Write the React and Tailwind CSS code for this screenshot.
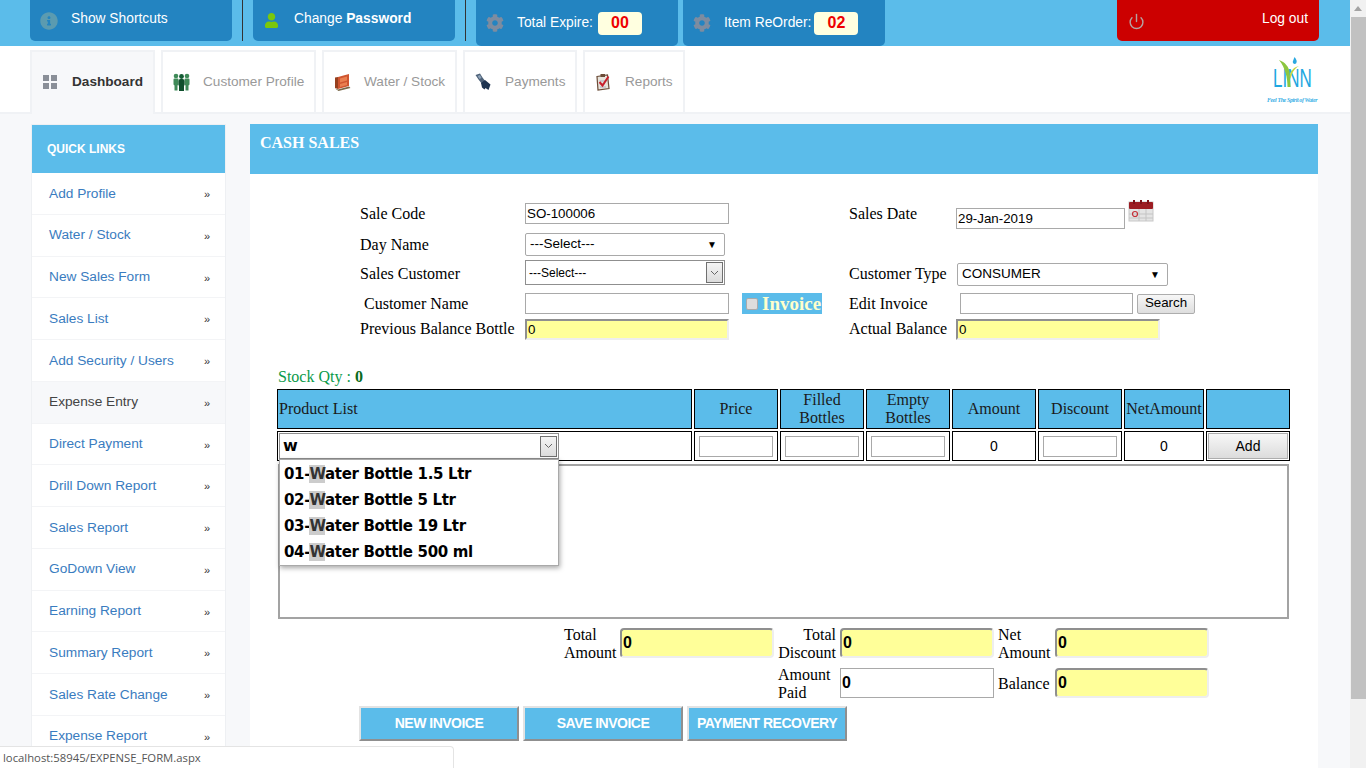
import { FaCog, FaInfoCircle, FaUser } from 'react-icons/fa';
import { Power } from 'lucide-react';

const serif = 'font-["Liberation_Serif",serif]';

const sideLinks = [
    'Add Profile', 'Water / Stock', 'New Sales Form', 'Sales List', 'Add Security / Users',
    'Expense Entry', 'Direct Payment', 'Drill Down Report', 'Sales Report', 'GoDown View',
    'Earning Report', 'Summary Report', 'Sales Rate Change', 'Expense Report',
];

const products = ['ater Bottle 1.5 Ltr', 'ater Bottle 5 Ltr', 'ater Bottle 19 Ltr', 'ater Bottle 500 ml'];

const CustomerIcon = () => (
    <svg width="17" height="18" viewBox="0 0 17 18">
        <g fill="#3f8a58">
            <circle cx="3" cy="3" r="2.3" /><circle cx="14" cy="3" r="2.3" />
            <path d="M0.5 6.5q0-1 1-1h3q1 0 1 1v5l-1 1v5h-3v-5l-1-1zM11.5 6.5q0-1 1-1h3q1 0 1 1v5l-1 1v5h-3v-5l-1-1z" />
        </g>
        <circle cx="8.5" cy="3.5" r="2.4" fill="#145c34" />
        <path d="M5.5 8q0-2 2-2h2q2 0 2 2v4l-.5 1v5h-5v-5l-.5-1z" fill="#0f4f2c" />
    </svg>
);

const StockIcon = () => (
    <svg width="17" height="18" viewBox="0 0 17 18">
        <path d="M4 4l11-3v12l-11 3z" fill="#cf5530" />
        <path d="M1 4.5l3-.5v12l-3-1z" fill="#96401f" />
        <path d="M6 5.5l7-2v4l-7 2zM6 11l7-2v3l-7 2z" fill="#ea7f50" />
        <path d="M1 15.5l3 1 11-3 1.5 1.5-12 3z" fill="#7a6848" />
    </svg>
);

const PaymentIcon = () => (
    <svg width="16" height="18" viewBox="0 0 16 18">
        <path d="M0.5 2l4.5-1.5 2.5 4 3 4-3.5 2.5-3.500-4.500z" fill="#4d6178" />
        <path d="M6 10l4-3 5.500 4.500-2 5.500-3-2-1 1.500-2.500-2z" fill="#1d3350" />
        <path d="M2.500 3l2.500-1 1.500 3-2 1z" fill="#8fa3b8" />
    </svg>
);

const ReportIcon = () => (
    <svg width="16" height="18" viewBox="0 0 16 18">
        <path d="M2 3.500l10.500-1.500 1.500 13.500-11 1.500z" fill="#e8e4dc" stroke="#6b4c38" strokeWidth="1.200" />
        <rect x="5.500" y="1" width="4.500" height="3" fill="#6b4c38" />
        <path d="M4.500 8h7M4.500 11h5M5 14h6" stroke="#aab2c0" strokeWidth="1" />
        <path d="M4.500 9l3 3.500 6-9" fill="none" stroke="#c8202c" strokeWidth="2" />
    </svg>
);

const CalendarIcon = () => (
    <svg width="26" height="23" viewBox="0 0 26 23">
        <rect x="1" y="3" width="24" height="19" fill="#e4e4e4" stroke="#c8c8c8" />
        <rect x="1" y="3" width="24" height="7" rx="1" fill="#9c1c22" />
        <rect x="5" y="1" width="2" height="4" fill="#7d1218" /><rect x="12" y="1" width="2" height="4" fill="#7d1218" /><rect x="19" y="1" width="2" height="4" fill="#7d1218" />
        <path d="M1 15h24M1 19h24M11 10v12M18 10v12" stroke="#c4c4c4" strokeWidth="1" />
        <circle cx="7" cy="15" r="2.500" fill="none" stroke="#c43038" strokeWidth="1.200" />
    </svg>
);

const Logo = () => (
    <div className="w-[56px] flex flex-col items-center">
        <svg width="30" height="30" viewBox="0 0 30 30" className="-mb-[20px] relative z-10 -ml-[3px]">
            <path d="M3 3c6 2 10 7 10.500 12l1 15h-3c0-9-2-19-8.500-27z" fill="#8cc63f" />
            <path d="M23 9c-4 2-7 6-8.500 13l-.8-3c1.300-6 4.300-9 9.300-10z" fill="#c4d641" />
            <path d="M18.500 0c2 2.500 3 4.500 1.500 6.500-1.500 1.200-3.500 0-3.200-2z" fill="#2aa8e0" />
        </svg>
        <div className='font-["Liberation_Sans",sans-serif] text-[25px] leading-[22px] text-[#1ea7e1] scale-x-[0.68]'>LINN</div>
        <div className='mt-[7px] font-["Liberation_Serif",serif] italic font-bold text-[6px] leading-[8px] text-[#3ab0e6] tracking-[-0.4px] whitespace-nowrap'>Feel The Spirit of Water</div>
    </div>
);

const TopButton = ({ width = 'w-[202px]', height = 'h-[41px]', bg = 'bg-[#2384c1]', children }) => (
    <div className={`${width} ${height} ${bg} rounded-b-[5px] flex items-center text-white text-[13.8px] shrink-0`}>
        {children}
    </div>
);

const Tab = ({ width, icon, active, children }) => (
    <div className={`${width} border-2 border-[#f0f2f5] border-b-0 flex items-center gap-[13px] pl-[9px] text-[13.6px] shrink-0 ${active ? 'h-[64px] -mb-[2px] pb-[2px] bg-[#f7f8fa] font-bold text-[#333333]' : 'h-[62px] bg-white text-[#999999]'}`}>
        <span className="w-[18px] flex justify-center">{icon}</span>
        {children}
    </div>
);

const TextInput = ({ width, value = '', yellow }) => (
    <input
        readOnly
        value={value}
        className={`${width} h-[21px] px-[1px] text-[13.33px] text-black outline-none ${yellow ? 'bg-[#ffff99] border-2 border-t-[#8f8f8f] border-l-[#8f8f8f] border-r-[#eeeeee] border-b-[#eeeeee]' : 'bg-white border border-[#a9a9a9]'}`}
    />
);

const SelectBox = ({ width, height = 'h-[23px]', text, className = '' }) => (
    <div className={`${width} ${height} border border-[#a9a9a9] rounded-[2px] bg-white flex items-center justify-between pl-[4px] pr-[7px] text-[13.5px] text-black ${className}`}>
        {text}
        <span className="text-[10px]">▼</span>
    </div>
);

const DropArrow = () => (
    <span className="w-[17px] h-[21px] border border-[#707070] bg-gradient-to-b from-[#f4f4f4] to-[#dcdcdc] flex items-center justify-center">
        <svg width="9" height="6" viewBox="0 0 9 6"><path d="M1 1l3.500 3.500 3.500-3.500" fill="none" stroke="#666666" /></svg>
    </span>
);

const Label = ({ width, className = '', children }) => (
    <div className={`${width} text-[16px] leading-[18px] text-black shrink-0 ${serif} ${className}`}>{children}</div>
);

const HeadCell = ({ children, left }) => (
    <div className={`border border-black bg-[#5bbcea] flex items-center text-[16px] leading-[18px] text-[#1a1a1a] ${left ? 'pl-[1px]' : 'justify-center text-center'} ${serif}`}>
        {children}
    </div>
);

const BodyCell = ({ children }) => (
    <div className="border border-black bg-white flex items-center justify-center text-[14px] text-black">{children}</div>
);

const CellInput = () => <input readOnly className="w-[74px] h-[21px] border border-[#a9a9a9] bg-white" />;

const TotalInput = ({ plain }) => (
    <input
        readOnly
        value="0"
        className={`w-[154px] h-[30px] px-[1px] text-[16px] font-bold text-black outline-none ${plain ? 'bg-white border border-[#a9a9a9]' : 'bg-[#ffff99] rounded-[4px] border-2 border-t-[#8f8f8f] border-l-[#8f8f8f] border-r-[#eeeeee] border-b-[#eeeeee]'}`}
    />
);

const ActionButton = ({ children }) => (
    <button className="w-[160px] h-[35px] bg-[#5bbcea] text-white text-[14px] font-bold tracking-[-0.5px] border-2 border-t-[#e3e3e3] border-l-[#e3e3e3] border-r-[#8f8f8f] border-b-[#8f8f8f]">
        {children}
    </button>
);

export default function App() {
    return (
        <div className='relative w-[1366px] h-[768px] overflow-hidden flex font-["Liberation_Sans",sans-serif] bg-[#f7f8fa]'>
            <div className="w-[1350px] shrink-0">
                {/* Top bar */}
                <header className="h-[46px] bg-[#5bbcea] flex items-start pl-[30px] pr-[31px]">
                    <TopButton>
                        <FaInfoCircle className="ml-[10px] text-[#5b9bb0] text-[18px]" />
                        <span className="ml-[13px] -mt-[2px]">Show Shortcuts</span>
                    </TopButton>
                    <div className="w-px h-[41px] bg-[#333333] ml-[10px] mr-[10px]" />
                    <TopButton>
                        <FaUser className="ml-[11px] text-[#7ac70c] text-[15px]" />
                        <span className="ml-[15px] -mt-[2px]">Change <b>Password</b></span>
                    </TopButton>
                    <div className="w-px h-[41px] bg-[#333333] ml-[10px] mr-[10px]" />
                    <TopButton height="h-[46px]">
                        <FaCog className="ml-[10px] text-[#7d8ca0] text-[18px]" />
                        <span className="ml-[13px] mt-[1px]">Total Expire:</span>
                        <span className="ml-[5px] w-[44px] h-[23px] rounded-[4px] bg-[#ffffe0] text-[#ee0000] font-bold text-[16px] flex items-center justify-center">00</span>
                    </TopButton>
                    <div className="w-[5px]" />
                    <TopButton height="h-[46px]">
                        <FaCog className="ml-[10px] text-[#7d8ca0] text-[18px]" />
                        <span className="ml-[13px] mt-[1px]">Item ReOrder:</span>
                        <span className="ml-[3px] w-[44px] h-[23px] rounded-[4px] bg-[#ffffe0] text-[#ee0000] font-bold text-[16px] flex items-center justify-center">02</span>
                    </TopButton>
                    <div className="ml-auto">
                        <TopButton bg="bg-[#cc0000]">
                            <Power className="ml-[11px] mt-[2px] text-[#b4a2a2]" size={17} strokeWidth={2} />
                            <span className="ml-auto mr-[11px] -mt-[2px]">Log out</span>
                        </TopButton>
                    </div>
                </header>

                {/* Tabs */}
                <nav className="h-[68px] bg-white border-b-2 border-[#f0f2f5] flex items-end gap-[6px] pl-[30px] pr-[28px]">
                    <Tab width="w-[125px]" active icon={
                        <span className="grid grid-cols-2 gap-[2px]">
                            <i className="w-[6px] h-[6px] bg-[#8a8f98]" /><i className="w-[6px] h-[6px] bg-[#8a8f98]" />
                            <i className="w-[6px] h-[6px] bg-[#8a8f98]" /><i className="w-[6px] h-[6px] bg-[#8a8f98]" />
                        </span>
                    }>Dashboard</Tab>
                    <Tab width="w-[155px]" icon={<CustomerIcon />}>Customer Profile</Tab>
                    <Tab width="w-[135px]" icon={<StockIcon />}>Water / Stock</Tab>
                    <Tab width="w-[114px]" icon={<PaymentIcon />}>Payments</Tab>
                    <Tab width="w-[102px]" icon={<ReportIcon />}>Reports</Tab>
                    <div className="ml-auto self-start mt-[11px] mr-[2px]"><Logo /></div>
                </nav>

                {/* Body */}
                <div className="flex items-start pl-[31px] pt-[10px] gap-[24px]">
                    <aside className="w-[195px] border border-[#eef0f3] bg-white shrink-0">
                        <div className="h-[48px] bg-[#5bbcea] text-white text-[12px] font-bold flex items-center pl-[15px]">QUICK LINKS</div>
                        {sideLinks.map((link) => (
                            <div
                                key={link}
                                className={`h-[41.75px] pt-[1px] border-b border-[#f3f4f6] flex items-center justify-between pl-[17px] pr-[15px] text-[13.7px] ${link === 'Expense Entry' ? 'bg-[#f7f8fa] text-[#444444]' : 'text-[#3a7cc0]'}`}
                            >
                                {link}
                                <span className="text-[11px] text-[#333333] mt-[1px]">»</span>
                            </div>
                        ))}
                    </aside>

                    <main className="w-[1068px] shrink-0 bg-white h-[700px]">
                        <div className={`h-[50px] bg-[#5bbcea] text-white text-[16px] font-bold pl-[10px] pt-[7px] ${serif}`}>CASH SALES</div>

                        {/* Sale form */}
                        <section className="relative pl-[110px] pt-[29px] h-[194px]">
                            <div className="flex h-[21px] items-center">
                                <Label width="w-[165px]">Sale Code</Label>
                                <TextInput width="w-[204px]" value="SO-100006" />
                                <Label width="w-[107px]" className="ml-[120px]">Sales Date</Label>
                                <div className="flex items-start mt-[10px]">
                                    <TextInput width="w-[169px]" value="29-Jan-2019" />
                                    <span className="ml-[3px] -mt-[9px]"><CalendarIcon /></span>
                                </div>
                            </div>
                            <div className="flex items-center mt-[9px]">
                                <Label width="w-[165px]">Day Name</Label>
                                <SelectBox width="w-[200px]" text="---Select---" />
                            </div>
                            <div className="flex items-center mt-[4px] h-[25px]">
                                <Label width="w-[165px]" className="pt-[2px]">Sales Customer</Label>
                                <div className="w-[200px] h-[25px] border border-[#8f8f8f] bg-white flex items-center justify-between pl-[3px] pr-[1px] text-[12px] text-black">
                                    ---Select---
                                    <DropArrow />
                                </div>
                                <Label width="w-[108px]" className="ml-[124px] pt-[2px]">Customer Type</Label>
                                <SelectBox width="w-[211px]" text="CONSUMER" className="mt-[3px]" />
                            </div>
                            <div className="flex items-center mt-[8px] h-[21px]">
                                <Label width="w-[165px]" className="pl-[4px]">Customer Name</Label>
                                <TextInput width="w-[204px]" />
                                <div className={`ml-[13px] w-[80px] h-[21px] bg-[#5bbcea] flex items-center pl-[4px] pt-[1px] text-[#ffffcc] text-[19px] font-bold overflow-hidden whitespace-nowrap ${serif}`}>
                                    <span className="w-[12px] h-[12px] bg-[#dddddd] border border-[#aaaaaa] rounded-[2px] mr-[4px] -mt-[1px] shrink-0" />
                                    Invoice
                                </div>
                                <Label width="w-[111px]" className="ml-[27px]">Edit Invoice</Label>
                                <TextInput width="w-[173px]" />
                                <button className="ml-[4px] w-[58px] h-[20px] border border-[#adadad] rounded-[2px] bg-gradient-to-b from-[#f7f7f7] to-[#dedede] text-[13.33px] leading-[16px] pb-[2px] text-black">Search</button>
                            </div>
                            <div className="flex items-center mt-[5px] h-[21px]">
                                <Label width="w-[165px]" className="pb-[2px]">Previous Balance Bottle</Label>
                                <TextInput width="w-[204px]" value="0" yellow />
                                <Label width="w-[107px]" className="ml-[120px] pb-[2px]">Actual Balance</Label>
                                <TextInput width="w-[204px]" value="0" yellow />
                            </div>
                        </section>

                        {/* Line items */}
                        <section className="pl-[27px]">
                            <div className={`text-[16px] leading-[18px] text-[#0a9a4a] pl-[1px] mb-[3px] ${serif}`}>
                                Stock Qty : <b className="text-[#0a6a20]">0</b>
                            </div>
                            <div className="grid grid-cols-[415px_84px_84px_84px_84px_84px_80px_84px] grid-rows-[40px_30px] gap-[2px] w-[1013px]">
                                <HeadCell left>Product List</HeadCell>
                                <HeadCell>Price</HeadCell>
                                <HeadCell>Filled Bottles</HeadCell>
                                <HeadCell>Empty Bottles</HeadCell>
                                <HeadCell>Amount</HeadCell>
                                <HeadCell>Discount</HeadCell>
                                <HeadCell>NetAmount</HeadCell>
                                <HeadCell />
                                <div className="relative border border-black bg-white flex items-center pl-[1px]">
                                    <div className="w-[280px] h-[26px] border border-[#8f8f8f] flex items-center justify-between pl-[3px] pr-[1px] text-[16px] font-bold text-black font-['DejaVu_Sans',sans-serif]">
                                        w
                                        <DropArrow />
                                    </div>
                                    {/* Autocomplete list */}
                                    <ul className="absolute z-10 left-[1px] top-[27px] w-[280px] h-[107px] border border-[#a9a9a9] bg-white shadow-[1px_2px_5px_rgba(0,0,0,0.35)] py-[1px] pl-[4px] text-[15px] leading-[26px] font-bold text-black font-['DejaVu_Sans',sans-serif] tracking-[-0.35px]">
                                        {products.map((name, i) => (
                                            <li key={name} className="h-[26px] whitespace-nowrap">
                                                0{i + 1}-<span className="bg-[#cccccc] text-[#333333]">W</span>{name}
                                            </li>
                                        ))}
                                    </ul>
                                </div>
                                <BodyCell><CellInput /></BodyCell>
                                <BodyCell><CellInput /></BodyCell>
                                <BodyCell><CellInput /></BodyCell>
                                <BodyCell>0</BodyCell>
                                <BodyCell><CellInput /></BodyCell>
                                <BodyCell>0</BodyCell>
                                <BodyCell>
                                    <button className="w-[80px] h-[26px] border border-[#adadad] bg-gradient-to-b from-[#f7f7f7] to-[#dcdcdc] text-[14px] text-black">Add</button>
                                </BodyCell>
                            </div>
                            <div className="ml-[1px] mt-[3px] w-[1011px] h-[155px] border-2 border-[#a3a3a3] bg-white" />
                        </section>

                        {/* Totals */}
                        <section className="relative pl-[109px] h-[125px]">
                            <div className="flex pt-[9px] h-[40px] pl-[205px]">
                                <Label width="w-[56px]" className="-mt-[2px]">Total<br />Amount</Label>
                                <TotalInput />
                                <Label width="w-[62px]" className="text-right -mt-[2px]">Total<br />Discount</Label>
                                <span className="w-[4px]" />
                                <TotalInput />
                                <Label width="w-[57px]" className="ml-[4px] -mt-[2px]">Net<br />Amount</Label>
                                <TotalInput />
                            </div>
                            <div className="flex mt-[9px] pl-[419px] h-[32px]">
                                <Label width="w-[62px]" className="-mt-[2px]">Amount<br />Paid</Label>
                                <TotalInput plain />
                                <Label width="w-[57px]" className="ml-[4px] pt-[7px]">Balance</Label>
                                <TotalInput />
                            </div>
                            <div className="flex gap-[4px] mt-[6px]">
                                <ActionButton>NEW INVOICE</ActionButton>
                                <ActionButton>SAVE INVOICE</ActionButton>
                                <ActionButton>PAYMENT RECOVERY</ActionButton>
                            </div>
                        </section>
                    </main>
                </div>
            </div>

            {/* Browser scrollbar */}
            <div className="w-[16px] h-[768px] bg-[#f1f1f1] flex flex-col items-center shrink-0">
                <div className="h-[17px] flex items-center justify-center">
                    <span className="w-0 h-0 border-x-[4px] border-x-transparent border-b-[5px] border-b-[#a3a3a3]" />
                </div>
                <div className="w-[15px] h-[682px] bg-[#c1c1c1]" />
            </div>

            {/* Browser status bubble */}
            <div className="absolute left-0 bottom-0 w-[454px] h-[22px] bg-white border-t border-r border-[#e4e4e4] rounded-tr-[4px] font-['Open_Sans',sans-serif] text-[11.3px] leading-[21px] text-[#555555] pl-[3px]">
                localhost:58945/EXPENSE_FORM.aspx
            </div>
        </div>
    );
}
